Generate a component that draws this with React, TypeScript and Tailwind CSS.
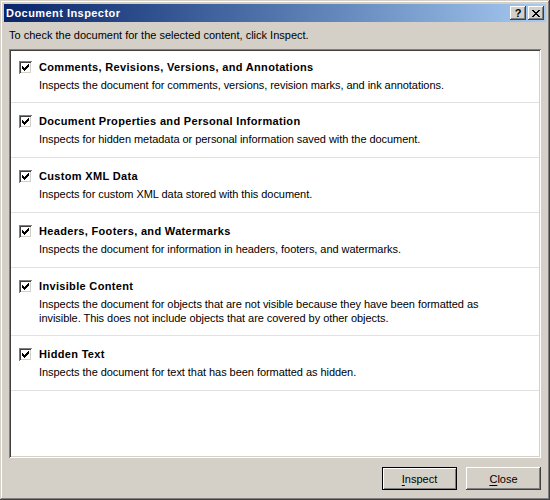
import React from "react";

const items: { title: string; desc: string[] }[] = [
  {
    title: "Comments, Revisions, Versions, and Annotations",
    desc: ["Inspects the document for comments, versions, revision marks, and ink annotations."],
  },
  {
    title: "Document Properties and Personal Information",
    desc: ["Inspects for hidden metadata or personal information saved with the document."],
  },
  {
    title: "Custom XML Data",
    desc: ["Inspects for custom XML data stored with this document."],
  },
  {
    title: "Headers, Footers, and Watermarks",
    desc: ["Inspects the document for information in headers, footers, and watermarks."],
  },
  {
    title: "Invisible Content",
    desc: [
      "Inspects the document for objects that are not visible because they have been formatted as",
      "invisible. This does not include objects that are covered by other objects.",
    ],
  },
  {
    title: "Hidden Text",
    desc: ["Inspects the document for text that has been formatted as hidden."],
  },
];

function CheckBox() {
  return (
    <div className="w-[13px] h-[13px] shrink-0 bg-white shadow-[inset_1px_1px_#808080,inset_-1px_-1px_#ffffff,inset_2px_2px_#404040,inset_-2px_-2px_#d4d0c8] mt-[1px]">
      <svg width="13" height="13" viewBox="0 0 13 13" shapeRendering="crispEdges">
        <g fill="#000" transform="translate(3 3)">
          <rect x="6" y="0" width="1" height="1" />
          <rect x="5" y="1" width="2" height="1" />
          <rect x="0" y="2" width="1" height="1" />
          <rect x="4" y="2" width="3" height="1" />
          <rect x="0" y="3" width="2" height="1" />
          <rect x="3" y="3" width="3" height="1" />
          <rect x="0" y="4" width="5" height="1" />
          <rect x="1" y="5" width="3" height="1" />
          <rect x="2" y="6" width="1" height="1" />
        </g>
      </svg>
    </div>
  );
}

function CloseGlyph() {
  return (
    <svg width="8" height="7" viewBox="0 0 8 7" shapeRendering="crispEdges">
      <g fill="#000">
        <rect x="0" y="0" width="2" height="1" />
        <rect x="6" y="0" width="2" height="1" />
        <rect x="1" y="1" width="2" height="1" />
        <rect x="5" y="1" width="2" height="1" />
        <rect x="2" y="2" width="4" height="1" />
        <rect x="3" y="3" width="2" height="1" />
        <rect x="2" y="4" width="4" height="1" />
        <rect x="1" y="5" width="2" height="1" />
        <rect x="5" y="5" width="2" height="1" />
        <rect x="0" y="6" width="2" height="1" />
        <rect x="6" y="6" width="2" height="1" />
      </g>
    </svg>
  );
}

const raised =
  "bg-[#d4d0c8] shadow-[inset_-1px_-1px_#404040,inset_1px_1px_#ffffff,inset_-2px_-2px_#808080,inset_2px_2px_#d4d0c8]";

export default function App() {
  return (
    <div
      className="w-[550px] h-[500px] bg-[#d4d0c8] p-[4px] flex flex-col text-black shadow-[inset_-1px_-1px_#404040,inset_1px_1px_#d4d0c8,inset_-2px_-2px_#808080,inset_2px_2px_#ffffff]"
      style={{ fontFamily: '"Liberation Sans", Arial, sans-serif' }}
    >
      {/* Title bar */}
      <div className="h-[18px] flex items-center bg-linear-to-r from-[#0a246a] to-[#a6caf0] pl-[2px] pr-[2px]">
        <div className="text-white font-bold text-[11px] leading-[14px] tracking-[0.45px] flex-1">Document Inspector</div>
        <div className="flex gap-[2px]">
          <div className={`w-[16px] h-[14px] flex items-center justify-center ${raised}`}>
            <span className="font-bold text-[11px] leading-[11px] pt-[1px]">?</span>
          </div>
          <div className={`w-[16px] h-[14px] flex items-center justify-center ${raised}`}>
            <CloseGlyph />
          </div>
        </div>
      </div>

      {/* Body */}
      <div className="flex-1 flex flex-col px-[5px]">
        <div className="mt-[6px] text-[11px] leading-[14px]">
          To check the document for the selected content, click Inspect.
        </div>

        <div className="mt-[7px] h-[409px] bg-white p-[2px] shadow-[inset_1px_1px_#808080,inset_-1px_-1px_#ffffff,inset_2px_2px_#404040,inset_-2px_-2px_#d4d0c8]">
          {items.map((it, i) => (
            <div
              key={it.title}
              className={`flex gap-[7px] pl-[8px] border-b border-[#e2e2e2] ${
                i === 0 ? "pt-[9px] pb-[10px]" : i === 4 ? "pt-[11px] pb-[10px]" : "pt-[11px] pb-[11px]"
              }`}
            >
              <CheckBox />
              <div className="flex flex-col">
                <div className="font-bold text-[11px] leading-[14px] tracking-[0.33px]">{it.title}</div>
                <div className="mt-[4px] text-[11px] leading-[14px] tracking-[-0.05px]">
                  {it.desc.map((d) => (
                    <div key={d}>{d}</div>
                  ))}
                </div>
              </div>
            </div>
          ))}
        </div>

        <div className="mt-[9px] flex justify-end gap-[9px]">
          <div className="w-[75px] h-[23px] border border-black bg-[#d4d0c8] shadow-[inset_1px_1px_#ffffff,inset_-1px_-1px_#808080] flex items-center justify-center text-[11px] leading-[14px]">
            <span>
              <span className="underline underline-offset-2">I</span>nspect
            </span>
          </div>
          <div className={`w-[75px] h-[23px] flex items-center justify-center text-[11px] leading-[14px] ${raised}`}>
            <span>
              <span className="underline underline-offset-2">C</span>lose
            </span>
          </div>
        </div>
      </div>
    </div>
  );
}
